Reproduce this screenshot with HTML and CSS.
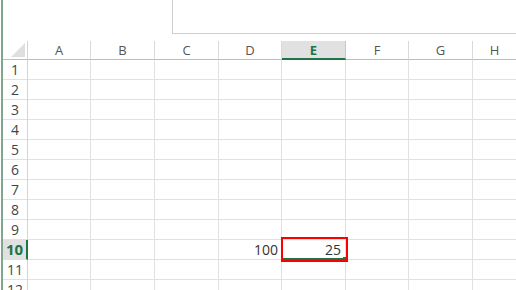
FILE: index.html
```html
<!DOCTYPE html>
<html>
<head>
<meta charset="utf-8">
<link rel="stylesheet" href="styles.css">
</head>
<body>
<div class="page">
  <div class="edge"></div>
  <div class="main">
    <div class="top">
      <div class="formula"></div>
    </div>
    <div class="sheet">
      <div class="corner"><div class="tri"></div></div>
      <div class="ch">A</div><div class="ch">B</div><div class="ch">C</div><div class="ch">D</div><div class="ch sel">E</div><div class="ch">F</div><div class="ch">G</div><div class="ch last">H</div>

      <div class="rh">1</div><div class="c"></div><div class="c"></div><div class="c"></div><div class="c"></div><div class="c"></div><div class="c"></div><div class="c"></div><div class="c last"></div>
      <div class="rh">2</div><div class="c"></div><div class="c"></div><div class="c"></div><div class="c"></div><div class="c"></div><div class="c"></div><div class="c"></div><div class="c last"></div>
      <div class="rh">3</div><div class="c"></div><div class="c"></div><div class="c"></div><div class="c"></div><div class="c"></div><div class="c"></div><div class="c"></div><div class="c last"></div>
      <div class="rh">4</div><div class="c"></div><div class="c"></div><div class="c"></div><div class="c"></div><div class="c"></div><div class="c"></div><div class="c"></div><div class="c last"></div>
      <div class="rh">5</div><div class="c"></div><div class="c"></div><div class="c"></div><div class="c"></div><div class="c"></div><div class="c"></div><div class="c"></div><div class="c last"></div>
      <div class="rh">6</div><div class="c"></div><div class="c"></div><div class="c"></div><div class="c"></div><div class="c"></div><div class="c"></div><div class="c"></div><div class="c last"></div>
      <div class="rh">7</div><div class="c"></div><div class="c"></div><div class="c"></div><div class="c"></div><div class="c"></div><div class="c"></div><div class="c"></div><div class="c last"></div>
      <div class="rh">8</div><div class="c"></div><div class="c"></div><div class="c"></div><div class="c"></div><div class="c"></div><div class="c"></div><div class="c"></div><div class="c last"></div>
      <div class="rh">9</div><div class="c"></div><div class="c"></div><div class="c"></div><div class="c"></div><div class="c"></div><div class="c"></div><div class="c"></div><div class="c last"></div>
      <div class="rh sel">10</div><div class="c"></div><div class="c"></div><div class="c"></div><div class="c num">100</div><div class="c num active">25<span class="outline"></span><span class="handle"></span></div><div class="c"></div><div class="c"></div><div class="c last"></div>
      <div class="rh">11</div><div class="c"></div><div class="c"></div><div class="c"></div><div class="c"></div><div class="c"></div><div class="c"></div><div class="c"></div><div class="c last"></div>
      <div class="rh">12</div><div class="c"></div><div class="c"></div><div class="c"></div><div class="c"></div><div class="c"></div><div class="c"></div><div class="c"></div><div class="c last"></div>
    </div>
  </div>
</div>
</body>
</html>
```

FILE: styles.css
```css
html, body {
  margin: 0;
  padding: 0;
  background: #fff;
  overflow: hidden;
}
.page {
  display: flex;
  width: 516px;
  height: 290px;
  overflow: hidden;
  font-family: "Open Sans", "Noto Sans", sans-serif;
}
.edge {
  width: 2px;
  margin-left: 1px;
  background: #7fa68e;
  flex: none;
}
.main {
  flex: 1;
  min-width: 0;
  display: flex;
  flex-direction: column;
}
.top {
  height: 41px;
  flex: none;
}
.formula {
  margin-left: 169px;
  height: 33px;
  border-left: 1px solid #cfcfcf;
  border-bottom: 1px solid #cfcfcf;
}
.sheet {
  display: grid;
  grid-template-columns: 25px 63px 64px 64px 63px 64px 63px 64px 1fr;
  grid-template-rows: 19px repeat(12, 20px);
}
.corner {
  border-right: 1px solid #d4d4d4;
  border-bottom: 1px solid #bdbdbd;
  position: relative;
}
.tri {
  position: absolute;
  right: 2px;
  bottom: 2px;
  width: 0;
  height: 0;
  border-left: 14px solid transparent;
  border-bottom: 14px solid #dfdfdf;
}
.ch {
  border-right: 1px solid #d9d9d9;
  border-bottom: 1px solid #bdbdbd;
  font-size: 13px;
  line-height: 18px;
  color: #555;
  text-align: center;
}
.ch.last, .c.last { border-right: none; }
.ch.sel {
  background: #e1e1e1;
  color: #217346;
  font-weight: bold;
  border-bottom: 2px solid #217346;
  line-height: 18px;
  border-right-color: #c6c6c6;
}
.rh {
  border-right: 1px solid #d4d4d4;
  border-bottom: 1px solid #e1e1e1;
  font-size: 14px;
  line-height: 19px;
  color: #444;
  text-align: center;
}
.rh.sel {
  background: #e1e1e1;
  color: #217346;
  font-weight: bold;
  font-size: 15px;
  border-right: 2px solid #217346;
}
.c {
  border-right: 1px solid #e1e1e1;
  border-bottom: 1px solid #e1e1e1;
  font-size: 14px;
  line-height: 19px;
  color: #333;
}
.num {
  text-align: right;
  padding-right: 3px;
}
.active {
  position: relative;
  border-bottom: 2px solid #217346;
  line-height: 19px;
  padding-right: 4px;
}
.outline {
  position: absolute;
  left: -1px;
  top: -3px;
  right: -3px;
  bottom: -4px;
  border: 2px solid #f00;
}
.handle {
  position: absolute;
  right: -1px;
  bottom: -2px;
  width: 3px;
  height: 3px;
  background: #217346;
}
```
